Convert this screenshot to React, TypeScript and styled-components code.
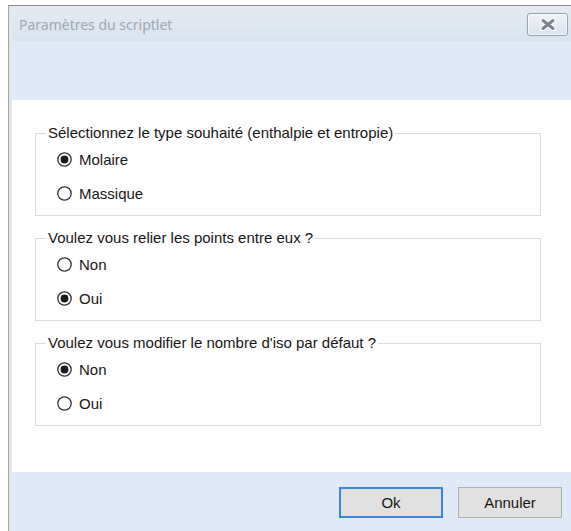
import React, { useState } from 'react'
import styled, { createGlobalStyle } from 'styled-components'

const GlobalStyle = createGlobalStyle`
  html, body {
    margin: 0;
    padding: 0;
    background: #ffffff;
  }
  body {
    font-family: "Liberation Sans", Arial, sans-serif;
  }
`

const Page = styled.div`
  padding: 5px 0 0 8px;
  height: 531px;
  box-sizing: border-box;
  overflow: hidden;
`

const Window = styled.div`
  width: 563px;
  border-top: 1px solid #8e8e8e;
  border-left: 1px solid #a3a3a3;
  box-sizing: border-box;
`

const Frame = styled.div`
  border-left: 3px solid #e4e7eb;
  display: flex;
  flex-direction: column;
`

const TitleBar = styled.div`
  height: 35px;
  display: flex;
  justify-content: space-between;
  align-items: flex-start;
  padding: 0 3px 0 7px;
  background: linear-gradient(#e5eaf0, #d9e3ef);
`

const Title = styled.span`
  font-family: "Noto Sans", "Open Sans", sans-serif;
  font-size: 14px;
  line-height: 35px;
  color: #a0a8b2;
  margin-top: 1px;
`

const CloseButton = styled.button`
  margin-top: 7px;
  width: 41px;
  height: 23px;
  padding: 0;
  display: flex;
  align-items: center;
  justify-content: center;
  border: 1px solid #97a2b0;
  border-radius: 3px;
  background: linear-gradient(#eef2f7, #dbe3ed);
  box-shadow: inset 0 0 0 1px rgba(255, 255, 255, 0.6);
`

const Banner = styled.div`
  height: 59px;
  background: #dfe9f8;
`

const Body = styled.div`
  height: 372px;
  box-sizing: border-box;
  padding: 24px 30px 0 23px;
  background: #ffffff;
  display: flex;
  flex-direction: column;
  gap: 13px;
`

const Group = styled.fieldset`
  margin: 0;
  padding: 0;
  border: 1px solid #dcdcdc;
  min-width: 0;
`

const Legend = styled.legend`
  margin-left: 10px;
  padding: 0 2px;
  font-size: 15px;
  line-height: 18px;
  color: #161616;
`

const Options = styled.div`
  display: flex;
  flex-direction: column;
  gap: 14px;
  padding: 7px 0 12px 21px;
`

const Option = styled.label`
  display: flex;
  align-items: center;
  gap: 7px;
  height: 20px;
  font-size: 15px;
  color: #161616;
  cursor: default;
`

const Footer = styled.div`
  height: 59px;
  box-sizing: border-box;
  background: #dfe9f8;
  display: flex;
  justify-content: flex-end;
  align-items: flex-start;
  gap: 15px;
  padding: 15px 9px 0 0;
`

const DialogButton = styled.button<{ $default?: boolean }>`
  width: 104px;
  height: 31px;
  box-sizing: border-box;
  background: #e1e1e1;
  border: ${(p) => (p.$default ? '2px solid #3a87d8' : '1px solid #adadad')};
  font-family: "Liberation Sans", Arial, sans-serif;
  font-size: 15px;
  color: #161616;
  padding: 0;
`

const RadioMark = ({ checked }: { checked: boolean }) => (
  <svg width="15" height="15" viewBox="0 0 15 15">
    <circle cx="7.5" cy="7.5" r="6.7" fill="#fff" stroke="#333" strokeWidth="1.3" />
    {checked && <circle cx="7.5" cy="7.5" r="3.9" fill="#1b1b1b" />}
  </svg>
)

const CloseIcon = () => (
  <svg width="18" height="13" viewBox="0 0 18 13">
    <path d="M4 2.5 L14 10.5 M14 2.5 L4 10.5" stroke="#fbfcfd" strokeWidth="5.4" strokeLinecap="round" />
    <path d="M4 2.5 L14 10.5 M14 2.5 L4 10.5" stroke="#7b838e" strokeWidth="3" strokeLinecap="round" />
  </svg>
)

interface Question {
  label: string
  choices: string[]
  initial: number
}

const questions: Question[] = [
  {
    label: 'Sélectionnez le type souhaité (enthalpie et entropie)',
    choices: ['Molaire', 'Massique'],
    initial: 0,
  },
  {
    label: 'Voulez vous relier les points entre eux ?',
    choices: ['Non', 'Oui'],
    initial: 1,
  },
  {
    label: "Voulez vous modifier le nombre d'iso par défaut ?",
    choices: ['Non', 'Oui'],
    initial: 0,
  },
]

const RadioGroup = ({ question }: { question: Question }) => {
  const [selected, setSelected] = useState(question.initial)
  return (
    <Group>
      <Legend>{question.label}</Legend>
      <Options>
        {question.choices.map((choice, i) => (
          <Option key={choice} onClick={() => setSelected(i)}>
            <RadioMark checked={selected === i} />
            {choice}
          </Option>
        ))}
      </Options>
    </Group>
  )
}

const App = () => (
  <Page>
    <GlobalStyle />
    <Window>
      <Frame>
        <TitleBar>
          <Title>Paramètres du scriptlet</Title>
          <CloseButton aria-label="Fermer">
            <CloseIcon />
          </CloseButton>
        </TitleBar>
        <Banner />
        <Body>
          {questions.map((q) => (
            <RadioGroup key={q.label} question={q} />
          ))}
        </Body>
        <Footer>
          <DialogButton $default>Ok</DialogButton>
          <DialogButton>Annuler</DialogButton>
        </Footer>
      </Frame>
    </Window>
  </Page>
)

export default App
